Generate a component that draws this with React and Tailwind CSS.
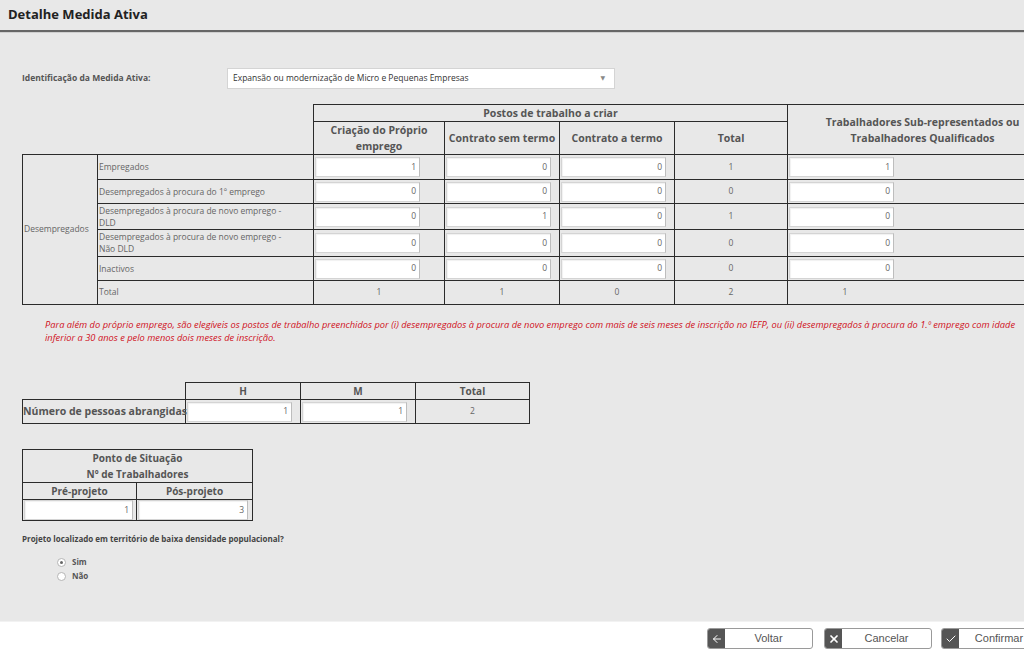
import React from 'react';
import { ArrowLeft, X, Check } from 'lucide-react';

const font = { fontFamily: '"Open Sans", "DejaVu Sans", sans-serif' };

const NumInput = ({ value, w = 'w-[105px]' }) => (
  <div
    className={`${w} h-[20px] bg-white border border-[#d4d4d4] border-r-[#bdbdbd] shadow-[inset_1px_1px_1px_rgba(0,0,0,0.06)] flex items-center justify-end pr-[3px] text-[8.5px] text-[#666]`}
  >
    {value}
  </div>
);

const rows = [
  { label: 'Empregados', vals: [1, 0, 0], total: 1, sub: 1, h: 'h-[25px]' },
  { label: 'Desempregados à procura do 1º emprego', vals: [0, 0, 0], total: 0, sub: 0, h: 'h-[24px]' },
  { label: ['Desempregados à procura de novo emprego -', 'DLD'], vals: [0, 1, 0], total: 1, sub: 0, h: 'h-[26px]' },
  { label: ['Desempregados à procura de novo emprego -', 'Não DLD'], vals: [0, 0, 0], total: 0, sub: 0, h: 'h-[27px]' },
  { label: 'Inactivos', vals: [0, 0, 0], total: 0, sub: 0, h: 'h-[24px]' },
];

const cell = 'border border-[#2b2b2b]';
const th = `${cell} font-bold text-[10.5px] text-[#555] text-center leading-[16px] p-0`;
const td = `${cell} text-[8.5px] text-[#666] p-0`;

const ActionButton = ({ icon: Icon, label, w, stroke = 2.5, className = '' }) => (
  <button className={`${w} ${className} h-[21px] flex items-stretch border border-[#9a9a9a] rounded-[3px] bg-white overflow-hidden shrink-0`}>
    <span className="w-[17px] bg-[#555] flex items-center justify-center">
      <Icon className="w-[12px] h-[12px] text-white" strokeWidth={stroke} />
    </span>
    <span className="flex-1 flex items-center justify-center text-[11px] text-[#555]" style={{ fontFamily: '"Liberation Sans", Arial, sans-serif' }}>
      {label}
    </span>
  </button>
);

const Radio = ({ checked, label }) => (
  <div className="flex items-center h-[14px]">
    <span className="w-[9px] h-[9px] rounded-full border border-[#b5b5b5] bg-white flex items-center justify-center">
      {checked && <span className="w-[3px] h-[3px] rounded-full bg-[#666]" />}
    </span>
    <span className="ml-[6px] text-[8px] font-bold text-[#555]">{label}</span>
  </div>
);

export default function App() {
  return (
    <div className="w-[1024px] h-[651px] overflow-hidden flex flex-col bg-white" style={font}>
      {/* Gray body */}
      <div className="h-[621px] bg-[#e8e8e8] flex flex-col shrink-0">
        {/* Header */}
        <div className="h-[32px] flex items-center pl-[8px] border-b-2 border-[#666]">
          <h1 className="text-[13px] font-bold text-[#222]">Detalhe Medida Ativa</h1>
        </div>
        <div className="h-px bg-[#cfcfcf]" />

        {/* Medida */}
        <div className="flex items-center mt-[35px] pl-[22px]">
          <span className="w-[205px] text-[8.5px] font-bold text-[#555]">Identificação da Medida Ativa:</span>
          <div className="w-[388px] h-[21px] bg-white border border-[#d4d4d4] flex items-center justify-between pl-[5px] pr-[9px] text-[8.5px] text-[#333]">
            <span>Expansão ou modernização de Micro e Pequenas Empresas</span>
            <span className="text-[6px] text-[#888]">▼</span>
          </div>
        </div>

        {/* Main table */}
        <div className="mt-[15px] pl-[22px] overflow-hidden">
          <table className="table-fixed w-[1035px]">
            <colgroup>
              <col className="w-[75px]" />
              <col className="w-[216px]" />
              <col className="w-[131px]" />
              <col className="w-[115px]" />
              <col className="w-[115px]" />
              <col className="w-[113px]" />
              <col className="w-[270px]" />
            </colgroup>
            <thead>
              <tr className="h-[16px]">
                <th colSpan={2} rowSpan={2} className="p-0" />
                <th colSpan={4} className={th}>Postos de trabalho a criar</th>
                <th rowSpan={2} className={th}>
                  Trabalhadores Sub-representados ou<br />Trabalhadores Qualificados
                </th>
              </tr>
              <tr className="h-[32px]">
                <th className={th}>Criação do Próprio<br />emprego</th>
                <th className={th}>Contrato sem termo</th>
                <th className={th}>Contrato a termo</th>
                <th className={th}>Total</th>
              </tr>
            </thead>
            <tbody>
              {rows.map((r, i) => (
                <tr key={i} className={r.h}>
                  {i === 0 && (
                    <td rowSpan={6} className={`${td} align-middle pl-px`}>Desempregados</td>
                  )}
                  <td className={`${td} pl-px leading-[12px]`}>
                    {Array.isArray(r.label) ? (
                      <>
                        {r.label[0]}
                        <br />
                        {r.label[1]}
                      </>
                    ) : (
                      r.label
                    )}
                  </td>
                  {r.vals.map((v, j) => (
                    <td key={j} className={`${td} pl-px`}>
                      <NumInput value={v} />
                    </td>
                  ))}
                  <td className={`${td} text-center`}>{r.total}</td>
                  <td className={`${td} pl-px`}>
                    <NumInput value={r.sub} />
                  </td>
                </tr>
              ))}
              <tr className="h-[24px]">
                <td className={`${td} pl-px`}>Total</td>
                <td className={`${td} text-center`}>1</td>
                <td className={`${td} text-center`}>1</td>
                <td className={`${td} text-center`}>0</td>
                <td className={`${td} text-center`}>2</td>
                <td className={td}>
                  <div className="w-[114px] text-center">1</div>
                </td>
              </tr>
            </tbody>
          </table>
        </div>

        {/* Note */}
        <p className="mt-[13px] pl-[45px] text-[9.3px] italic text-[#d0101c] leading-[13px] whitespace-nowrap">
          Para além do próprio emprego, são elegíveis os postos de trabalho preenchidos por (i) desempregados à procura de novo emprego com mais de seis meses de inscrição no IEFP, ou (ii) desempregados à procura do 1.º emprego com idade
          <br />
          inferior a 30 anos e pelo menos dois meses de inscrição.
        </p>

        {/* Pessoas abrangidas */}
        <div className="mt-[38px] pl-[22px]">
          <table className="table-fixed w-[507px]">
            <colgroup>
              <col className="w-[163px]" />
              <col className="w-[115px]" />
              <col className="w-[115px]" />
              <col className="w-[114px]" />
            </colgroup>
            <tbody>
              <tr className="h-[16px]">
                <td className="p-0" />
                <th className={`${th} text-[10px]`}>H</th>
                <th className={`${th} text-[10px]`}>M</th>
                <th className={`${th} text-[10px]`}>Total</th>
              </tr>
              <tr className="h-[24px]">
                <td className={`${cell} p-0 text-[10.5px] font-bold text-[#555] whitespace-nowrap`}>Número de pessoas abrangidas</td>
                <td className={`${td} pl-px`}>
                  <NumInput value={1} w="w-[105px]" />
                </td>
                <td className={`${td} pl-px`}>
                  <NumInput value={1} w="w-[105px]" />
                </td>
                <td className={`${td} text-center`}>2</td>
              </tr>
            </tbody>
          </table>
        </div>

        {/* Ponto de situação */}
        <div className="mt-[25px] pl-[22px]">
          <table className="table-fixed w-[230px]">
            <colgroup>
              <col className="w-[114px]" />
              <col className="w-[116px]" />
            </colgroup>
            <tbody>
              <tr className="h-[31px]">
                <th colSpan={2} className={`${th} text-[10px] leading-[15px]`}>
                  Ponto de Situação<br />Nº de Trabalhadores
                </th>
              </tr>
              <tr className="h-[17px]">
                <th className={`${th} text-[10px]`}>Pré-projeto</th>
                <th className={`${th} text-[10px]`}>Pós-projeto</th>
              </tr>
              <tr className="h-[21px]">
                <td className={`${td} pl-px`}>
                  <NumInput value={1} w="w-[109px]" />
                </td>
                <td className={`${td} pl-px`}>
                  <NumInput value={3} w="w-[110px]" />
                </td>
              </tr>
            </tbody>
          </table>
        </div>

        {/* Question */}
        <p className="mt-[11px] pl-[22px] text-[8px] font-bold text-[#444] leading-[13px]">
          Projeto localizado em território de baixa densidade populacional?
        </p>
        <div className="mt-[10px] pl-[57px] flex flex-col">
          <Radio checked label="Sim" />
          <Radio label="Não" />
        </div>
      </div>

      {/* Footer buttons */}
      <div className="flex-1 bg-white border-t border-[#f2f2f2] flex justify-end items-start pt-[6px] gap-[9px] -mr-[16px]">
        <ActionButton icon={ArrowLeft} label="Voltar" w="w-[106px]" stroke={2} className="mr-[2px]" />
        <ActionButton icon={X} label="Cancelar" w="w-[108px]" stroke={3.5} />
        <ActionButton icon={Check} label="Confirmar" w="w-[99px]" stroke={2} />
      </div>
    </div>
  );
}
